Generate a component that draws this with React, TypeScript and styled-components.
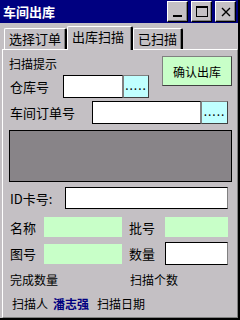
import styled, { createGlobalStyle } from "styled-components";

const GlobalStyle = createGlobalStyle`
    html, body {
        margin: 0;
        padding: 0;
        background: #c4c0c4;
    }
    * {
        box-sizing: border-box;
    }
`;

const font = `"Noto Sans CJK SC", "Noto Sans", sans-serif`;

const Window = styled.div`
    width: 240px;
    height: 320px;
    background: #c4c0c4;
    display: flex;
    flex-direction: column;
    font-family: ${font};
    font-size: 13px;
    color: #000;
    border-right: 2px solid #000;
    border-bottom: 2px solid #000;
    overflow: hidden;
`;

const TitleBar = styled.div`
    height: 23px;
    background: #000080;
    display: flex;
    align-items: center;
    padding: 0 2px 0 3px;
    .title {
        flex: 1;
        color: #fff;
        font-weight: bold;
        font-size: 13px;
        line-height: 23px;
    }
`;

const CaptionButton = styled.div`
    width: 21px;
    height: 21px;
    margin-left: 3px;
    background: #c4c0c4;
    border-top: 1px solid #fff;
    border-left: 1px solid #fff;
    border-right: 1px solid #000;
    border-bottom: 1px solid #000;
    box-shadow: inset -1px -1px 0 #808080;
    display: flex;
    align-items: center;
    justify-content: center;
    svg {
        display: block;
    }
`;

const TabRow = styled.div`
    height: 26px;
    display: flex;
    align-items: flex-end;
    padding-left: 4px;
    position: relative;
    z-index: 1;
`;

const Tab = styled.div<{ $active?: boolean; $w: number }>`
    width: ${p => p.$w}px;
    height: ${p => (p.$active ? 24 : 21)}px;
    margin-bottom: ${p => (p.$active ? -1 : 0)}px;
    background: #c4c0c4;
    border-top: 1px solid #fff;
    border-left: 1px solid #fff;
    border-right: 2px solid #000;
    border-radius: 2px 2px 0 0;
    box-shadow: inset -1px 0 0 #808080;
    font-size: 13px;
    line-height: ${p => (p.$active ? 20 : 19)}px;
    padding-left: 4px;
    white-space: nowrap;
`;

const Panel = styled.div`
    flex: 1;
    margin-left: 2px;
    border-top: 1px solid #fff;
    border-left: 1px solid #fff;
    border-right: 1px solid #808080;
    border-bottom: 1px solid #808080;
    padding: 6px 0 0 6px;
    display: flex;
    flex-direction: column;
`;

const TopSection = styled.div`
    display: flex;
    height: 42px;
`;

const LeftColumn = styled.div`
    display: flex;
    flex-direction: column;
`;

const Hint = styled.div`
    height: 19px;
    line-height: 16px;
    font-size: 12px;
`;

const FieldRow = styled.div<{ $h: number; $mt: number }>`
    display: flex;
    align-items: center;
    height: ${p => p.$h}px;
    margin-top: ${p => p.$mt}px;
`;

const Label = styled.div<{ $w: number; $pl?: number }>`
    width: ${p => p.$w}px;
    padding-left: ${p => p.$pl ?? 1}px;
    white-space: nowrap;
    font-size: 13px;
`;

const TextInput = styled.div<{ $w: number; $h: number }>`
    width: ${p => p.$w}px;
    height: ${p => p.$h}px;
    background: #fff;
    border: 1px solid #000;
    border-right-color: #808080;
`;

const DotsButton = styled.div<{ $w: number; $h: number }>`
    width: ${p => p.$w}px;
    height: ${p => p.$h}px;
    background: #c0ffff;
    border: 1px solid #808080;
    border-right-color: #404040;
    border-bottom-color: #404040;
    font-size: 12px;
    line-height: 12px;
    letter-spacing: 1px;
    display: flex;
    align-items: flex-end;
    justify-content: center;
    padding-bottom: 6px;
`;

const ConfirmButton = styled.div`
    margin-left: auto;
    margin-right: 5px;
    width: 70px;
    height: 30px;
    background: #c8ffc8;
    border: 1px solid #808080;
    border-right-color: #404040;
    border-bottom-color: #404040;
    display: flex;
    align-items: center;
    justify-content: center;
    font-size: 12px;
`;

const ScanArea = styled.div`
    width: 223px;
    height: 52px;
    margin-top: 6px;
    background: #888488;
    border: 1px solid #000;
`;

const GreenField = styled.div<{ $w: number }>`
    width: ${p => p.$w}px;
    height: 20px;
    background: #c8ffc8;
`;

const InfoRow = styled.div<{ $mt: number }>`
    display: flex;
    align-items: center;
    height: 14px;
    margin-top: ${p => p.$mt}px;
    font-size: 12px;
    white-space: nowrap;
`;

const InfoText = styled.span<{ $w?: number; $pl?: number; $bold?: boolean }>`
    display: inline-block;
    width: ${p => (p.$w ? `${p.$w}px` : "auto")};
    padding-left: ${p => p.$pl ?? 0}px;
    font-weight: ${p => (p.$bold ? "bold" : "normal")};
    color: ${p => (p.$bold ? "#000080" : "#000")};
`;

const App = () => {
    return (
        <>
            <GlobalStyle />
            <Window>
                <TitleBar>
                    <div className="title">车间出库</div>
                    <CaptionButton>
                        <svg width="12" height="12" viewBox="0 0 12 12">
                            <rect x="1" y="9" width="9" height="2" fill="#000" />
                        </svg>
                    </CaptionButton>
                    <CaptionButton>
                        <svg width="14" height="13" viewBox="0 0 14 13">
                            <rect x="1.5" y="1.5" width="11" height="10" fill="none" stroke="#000" />
                            <rect x="1" y="1" width="12" height="2" fill="#000" />
                        </svg>
                    </CaptionButton>
                    <CaptionButton>
                        <svg width="12" height="12" viewBox="0 0 12 12">
                            <path d="M2 2 L10 10 M10 2 L2 10" stroke="#000" strokeWidth="1.4" />
                        </svg>
                    </CaptionButton>
                </TitleBar>
                <TabRow>
                    <Tab $w={63}>选择订单</Tab>
                    <Tab $w={66} $active>出库扫描</Tab>
                    <Tab $w={50}>已扫描</Tab>
                </TabRow>
                <Panel>
                    <TopSection>
                        <LeftColumn>
                            <Hint>扫描提示</Hint>
                            <FieldRow $h={23} $mt={0}>
                                <Label $w={54}>仓库号</Label>
                                <TextInput $w={60} $h={23} />
                                <DotsButton $w={26} $h={23}>.....</DotsButton>
                            </FieldRow>
                        </LeftColumn>
                        <ConfirmButton>确认出库</ConfirmButton>
                    </TopSection>
                    <FieldRow $h={23} $mt={3}>
                        <Label $w={83}>车间订单号</Label>
                        <TextInput $w={109} $h={23} />
                        <DotsButton $w={27} $h={23}>.....</DotsButton>
                    </FieldRow>
                    <ScanArea />
                    <FieldRow $h={22} $mt={5}>
                        <Label $w={56}>ID卡号:</Label>
                        <TextInput $w={163} $h={22} />
                    </FieldRow>
                    <FieldRow $h={20} $mt={8}>
                        <Label $w={35}>名称</Label>
                        <GreenField $w={78} />
                        <Label $w={43} $pl={7}>批号</Label>
                        <GreenField $w={63} />
                    </FieldRow>
                    <FieldRow $h={23} $mt={5}>
                        <Label $w={35}>图号</Label>
                        <GreenField $w={78} />
                        <Label $w={43} $pl={7}>数量</Label>
                        <TextInput $w={63} $h={23} />
                    </FieldRow>
                    <InfoRow $mt={7}>
                        <InfoText $w={121} $pl={1}>完成数量</InfoText>
                        <InfoText>扫描个数</InfoText>
                    </InfoRow>
                    <InfoRow $mt={10}>
                        <InfoText $w={44} $pl={3}>扫描人</InfoText>
                        <InfoText $w={44} $bold>潘志强</InfoText>
                        <InfoText>扫描日期</InfoText>
                    </InfoRow>
                </Panel>
            </Window>
        </>
    );
};

export default App;
